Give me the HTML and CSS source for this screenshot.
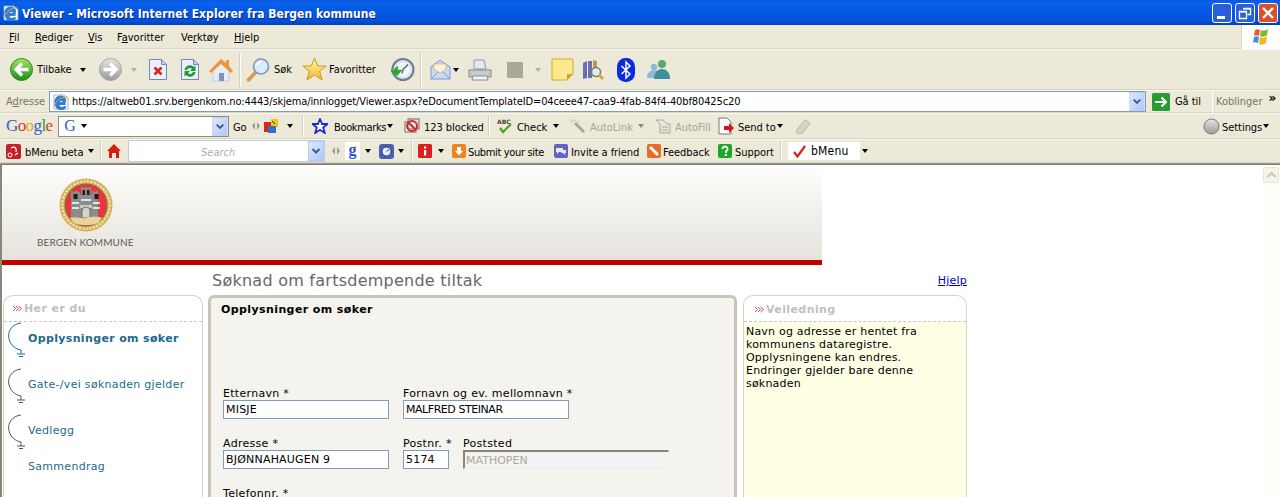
FILE: index.html
```html
<!DOCTYPE html>
<html lang="no">
<head>
<meta charset="utf-8">
<title>Viewer</title>
<link rel="stylesheet" href="styles.css">
</head>
<body>
<svg class="defs" width="0" height="0">
  <defs>
    <linearGradient id="gGreen" x1="0" y1="0" x2="0" y2="1"><stop offset="0" stop-color="#a4e36a"/><stop offset="1" stop-color="#1f8a1a"/></linearGradient>
    <linearGradient id="gGray" x1="0" y1="0" x2="0" y2="1"><stop offset="0" stop-color="#e4e4e4"/><stop offset="1" stop-color="#9a9a9a"/></linearGradient>
    <linearGradient id="gDrop" x1="0" y1="0" x2="1" y2="1"><stop offset="0" stop-color="#e1eafe"/><stop offset="1" stop-color="#aec6f5"/></linearGradient>
    <linearGradient id="gStar" x1="0" y1="0" x2="0" y2="1"><stop offset="0" stop-color="#fff6a8"/><stop offset="1" stop-color="#f2b92c"/></linearGradient>
    <symbol id="ie" viewBox="0 0 16 16"><path d="M1 1h10l4 4v10H1z" fill="#fff" stroke="#8fa6cc" stroke-width=".8"/><path d="M2 10a6 6 0 0 1 11-5l-.5 6H6.500a2.500 2.500 0 0 0 4.500 1l2.500.5A6 6 0 0 1 2 10zM6.500 8H10a2 2 0 0 0-3.500 0z" fill="#2f7fd8" fill-rule="evenodd"/><path d="M1 13c-1-2 4-8 10-10 3-1 4 0 4 2" fill="none" stroke="#e5a92c" stroke-width="1"/></symbol>
    <symbol id="drop" viewBox="0 0 16 20"><rect x=".5" y=".5" width="15" height="19" fill="url(#gDrop)" stroke="#b9ccf0"/><path d="M4.500 8 8 11.500 11.500 8" fill="none" stroke="#3d5a94" stroke-width="2"/></symbol>
    <symbol id="handle" viewBox="0 0 8 8"><path d="M3 0v8L0 4zM5 0v8l3-4z" fill="#a09d90"/></symbol>
    <symbol id="sq-i" viewBox="0 0 14 14"><rect width="14" height="14" rx="1.500" fill="#d8201c"/></symbol>
  </defs>
</svg>

<header class="titlebar">
  <svg class="title-icon" width="16" height="16"><use href="#ie"/></svg>
  <span class="title-text">Viewer - Microsoft Internet Explorer fra Bergen kommune</span>
  <div class="win-btns">
    <button class="win-btn" aria-label="Minimer"><svg width="20" height="20"><rect x="5" y="13" width="8" height="3" fill="#fff"/></svg></button>
    <button class="win-btn" aria-label="Gjenopprett"><svg width="20" height="20"><path d="M8.500 5.500h7v6h-3M4.500 8.500h7v7h-7z" fill="none" stroke="#fff" stroke-width="1.300"/><path d="M8 5h8v1.500H8zM4 8h8v1.500H4z" fill="#fff"/></svg></button>
    <button class="win-btn win-close" aria-label="Lukk"><svg width="20" height="20"><path d="M5 5l10 10M15 5 5 15" stroke="#fff" stroke-width="2.400"/></svg></button>
  </div>
</header>

<nav class="menubar">
  <span class="menu"><u>F</u>il</span>
  <span class="menu"><u>R</u>ediger</span>
  <span class="menu"><u>V</u>is</span>
  <span class="menu">F<u>a</u>voritter</span>
  <span class="menu">Ve<u>r</u>ktøy</span>
  <span class="menu"><u>H</u>jelp</span>
  <div class="flag">
    <svg width="20" height="19" viewBox="0 0 20 19"><path d="M4 3c2-1 3-1 5 0l-1 6c-2-1-3-1-5 0z" fill="#e8592a"/><path d="M10 3c2 1 4 1 7-1l-1 6c-3 2-5 2-7 1z" fill="#7eb62e"/><path d="M3 10c2-1 3-1 5 0l-1 6c-2-1-4-1-5 0z" fill="#3c8fdc"/><path d="M9 10c2 1 4 1 7-1l-1 7c-3 2-5 2-7 1z" fill="#f2b71e"/></svg>
  </div>
</nav>

<div class="tb tb-main">
  <svg width="23" height="23" viewBox="0 0 23 23"><circle cx="11.500" cy="11.500" r="11" fill="url(#gGreen)" stroke="#2a8a22"/><path d="M18.500 11.500H7M12 5.500l-6 6 6 6" fill="none" stroke="#fff" stroke-width="3.400"/></svg>
  <span class="tb-label">Tilbake</span>
  <i class="caret"></i>
  <svg width="23" height="23" viewBox="0 0 23 23"><circle cx="11.500" cy="11.500" r="11" fill="url(#gGray)" stroke="#a5a5a5"/><path d="M4.500 11.500H16M11 5.500l6 6-6 6" fill="none" stroke="#fff" stroke-width="3.400"/></svg>
  <i class="caret caret-off"></i>
  <svg width="20" height="23" viewBox="0 0 20 23"><path d="M1.500 1.500h12l5 5v15h-17z" fill="#eaf0fc" stroke="#6f88b8"/><path d="M13.500 1.500v5h5z" fill="#c4d4f0" stroke="#6f88b8"/><path d="M6.500 9.500l7 7m0-7-7 7" stroke="#d8261c" stroke-width="2.600"/></svg>
  <svg width="20" height="23" viewBox="0 0 20 23"><path d="M1.500 1.500h12l5 5v15h-17z" fill="#eaf0fc" stroke="#6f88b8"/><path d="M13.500 1.500v5h5z" fill="#c4d4f0" stroke="#6f88b8"/><path d="M4.500 12a5.500 5.500 0 0 1 9.500-3l1.500-1.500V13h-5.500l2-2a3 3 0 0 0-5 1zM15.500 14a5.500 5.500 0 0 1-9.500 3l-1.500 1.500V13H10l-2 2a3 3 0 0 0 5-1z" fill="#1f9a2e"/></svg>
  <svg width="24" height="24" viewBox="0 0 24 24"><path d="M4 12l8-7 8 7v11H4z" fill="#e4edf8" stroke="#a9bbd4" stroke-width=".6"/><path d="M10 15h5v8h-5z" fill="#7d95bd"/><path d="M0 13 12 1l5 4V2h3v6l4 5-2 2-10-9-10 9z" fill="#f0923a"/></svg>
  <i class="sep"></i>
  <svg width="25" height="25" viewBox="0 0 25 25"><path d="M2.500 23l7.500-8" stroke="#d69a4a" stroke-width="3.500" stroke-linecap="round"/><circle cx="15" cy="9.500" r="7.500" fill="#dbeafc" stroke="#7895c4" stroke-width="1.600"/><path d="M11 8a4.500 4.500 0 0 1 4-3" fill="none" stroke="#fff" stroke-width="1.500"/></svg>
  <span class="tb-label">Søk</span>
  <svg width="25" height="25" viewBox="0 0 25 25"><path d="M12.500 1l3.300 8h8.400l-6.600 5.300 2.500 8.700-7.600-5-7.600 5 2.500-8.700L.8 9h8.400z" fill="url(#gStar)" stroke="#c99a22"/></svg>
  <span class="tb-label">Favoritter</span>
  <svg width="25" height="25" viewBox="0 0 25 25"><circle cx="13" cy="12.500" r="10.500" fill="#d6e6ee" stroke="#6b7d8a" stroke-width="2"/><circle cx="13" cy="12.500" r="7" fill="#f2f6f8"/><path d="M13 12.500l5-5M13 12.500l-1 4" stroke="#555" stroke-width="1.200"/><path d="M1 12l2.500 2c1-3 3-4.500 5-5l-1 3.500 5 .5-5.500 6-6-4z" fill="#2fa52c"/></svg>
  <i class="sep"></i>
  <svg width="21" height="24" viewBox="0 0 21 24"><path d="M1 9l9-7 10 7v12H1z" fill="#c9d8f4" stroke="#7d99cf"/><path d="M4 11V6h12v5l-6 4z" fill="#fff3d4" stroke="#d2a564" stroke-width=".7"/><path d="M1 21l7-7M20 21l-7-7" stroke="#7d99cf"/></svg>
  <i class="caret"></i>
  <svg width="24" height="24" viewBox="0 0 24 24"><path d="M6 2h10l2 9H6z" fill="#dfe8f4" stroke="#8a9bb2"/><path d="M1 12h22v7H1z" fill="#c9cbc9" stroke="#808583"/><path d="M5 18h14l1 4H4z" fill="#f4f4f4" stroke="#8c8c8c"/></svg>
  <span class="gray-square"></span>
  <i class="caret caret-off"></i>
  <svg width="23" height="23" viewBox="0 0 23 23"><path d="M1 1h21v15l-6 6H1z" fill="#fde88e" stroke="#d6a624"/><path d="M16 22v-6h6z" fill="#d6a624"/></svg>
  <svg width="23" height="23" viewBox="0 0 23 23"><path d="M1 5l4-2v17l-4 1zM6 3h4v17H6z" fill="#6a6fb4"/><path d="M11 2l4 1v11h-4z" fill="#b29a62"/><circle cx="14" cy="14" r="4.500" fill="#dcecf8" stroke="#8c7a45" stroke-width="1.500"/><path d="M17 17l4 4" stroke="#d6a23c" stroke-width="2.500"/></svg>
  <svg width="18" height="24" viewBox="0 0 18 24"><rect width="18" height="24" rx="8.500" fill="#0a2ce0"/><path d="M4.500 8l8.500 8-4 4V4l4 4-8.500 8" fill="none" stroke="#fff" stroke-width="1.500"/></svg>
  <svg width="25" height="22" viewBox="0 0 25 22"><circle cx="8" cy="8" r="3.200" fill="#8fb8d8"/><path d="M1 19c0-5 3-8 7-8s6 3 6 8z" fill="#8fb8d8"/><circle cx="16" cy="5" r="4" fill="#5aa86a"/><path d="M8 20c0-7 4-10 8-10s8 3 8 10z" fill="#3f8f9f"/></svg>
</div>

<div class="tb tb-addr">
  <span class="addr-label">A<u>d</u>resse</span>
  <div class="addr-input">
    <svg width="16" height="16"><use href="#ie"/></svg>
    <span class="addr-url">https://altweb01.srv.bergenkom.no:4443/skjema/innlogget/Viewer.aspx?eDocumentTemplateID=04ceee47-caa9-4fab-84f4-40bf80425c20</span>
    <svg class="drop" width="16" height="19"><use href="#drop"/></svg>
  </div>
  <svg class="go" width="18" height="18" viewBox="0 0 18 18"><rect width="18" height="18" rx="1.500" fill="#2a9a34"/><path d="M3 9h11M9.500 4.500 14 9l-4.500 4.500" fill="none" stroke="#fff" stroke-width="2"/></svg>
  <span class="tb-label">Gå til</span>
  <span class="links">Koblinger</span>
  <span class="chev">»</span>
</div>

<div class="tb tb-google">
  <span class="glogo"><b class="gb">G</b><b class="gr">o</b><b class="gy">o</b><b class="gb">g</b><b class="gg">l</b><b class="gr">e</b></span>
  <div class="field field-g">
    <span class="g-mini">G</span><i class="caret caret-tight"></i>
    <svg class="drop" width="16" height="19"><use href="#drop"/></svg>
  </div>
  <span class="tb-label">Go</span>
  <svg width="8" height="8"><use href="#handle"/></svg>
  <svg width="16" height="16" viewBox="0 0 16 16"><path d="M1 4h8v10H1z" fill="#d8261c"/><path d="M8 1h7v8H8z" fill="#f2c21e"/><path d="M5 8h8v7H5z" fill="#2f6fd0"/><path d="M9 3l3 3" stroke="#333"/></svg>
  <i class="caret"></i>
  <i class="sep sep-s"></i>
  <svg width="16" height="16" viewBox="0 0 16 16"><path d="M8 1l2 5h5.500l-4.300 3.500 1.600 5.500L8 11.800 3.200 15l1.600-5.500L.5 6H6z" fill="#fff" stroke="#1a2ad8" stroke-width="1.800"/></svg>
  <span class="tb-label tight">Bookmarks</span>
  <i class="caret"></i>
  <svg width="16" height="16" viewBox="0 0 16 16"><rect x="1" y="4" width="11" height="10" fill="#fff" stroke="#666"/><rect x="4" y="1" width="11" height="10" fill="#dbe6f8" stroke="#666"/><circle cx="8" cy="8" r="5" fill="none" stroke="#d8261c" stroke-width="2"/><path d="M4.500 4.500l7 7" stroke="#d8261c" stroke-width="2"/></svg>
  <span class="tb-label">123 blocked</span>
  <i class="sep sep-s"></i>
  <svg class="abc" width="17" height="16" viewBox="0 0 17 16"><text x="0" y="6" class="abc-t">ABC</text><path d="M3 10l3 4 8-8" fill="none" stroke="#4aa52c" stroke-width="2.200"/></svg>
  <span class="tb-label">Check</span>
  <i class="caret"></i>
  <svg width="16" height="16" viewBox="0 0 16 16"><path d="M5 5l9 9" stroke="#aaa69a" stroke-width="3"/><path d="M4 1v2M1 4h2M7 4h2M2 2l1 1M6 2l-1 1" stroke="#c4c0b4"/></svg>
  <span class="tb-label off">AutoLink</span>
  <i class="caret caret-mid"></i>
  <svg width="16" height="16" viewBox="0 0 16 16"><path d="M1 2h7l4 4h3v9H5V6z" fill="#e8e5da" stroke="#aaa69a"/><path d="M7 9h6M7 12h6" stroke="#aaa69a"/></svg>
  <span class="tb-label off">AutoFill</span>
  <svg width="17" height="18" viewBox="0 0 17 18"><path d="M1 1h8l4 4v12H1z" fill="#fff" stroke="#777"/><path d="M6 9h5V6l5 5-5 5v-3H6z" fill="#d8141c"/></svg>
  <span class="tb-label">Send to</span>
  <i class="caret"></i>
  <svg width="16" height="17" viewBox="0 0 16 17"><path d="M1 13 10 2l5 3-7 10-5 1z" fill="#d5d2c6" stroke="#bbb8aa"/></svg>
  <svg width="17" height="17" viewBox="0 0 17 17"><circle cx="8.500" cy="8.500" r="7.500" fill="url(#gGray)" stroke="#777"/></svg>
  <span class="tb-label">Settings</span>
  <i class="caret"></i>
</div>

<div class="tb tb-bmenu">
  <svg width="15" height="15" viewBox="0 0 15 15"><rect width="15" height="15" rx="2" fill="#c4202a"/><circle cx="4" cy="11" r="2" fill="none" stroke="#fff"/><path d="M5 4c4-2 6 0 5 4M9 11l3-2" stroke="#fff" fill="none" stroke-width="1.300"/></svg>
  <span class="tb-label">bMenu beta</span>
  <i class="caret"></i>
  <i class="sep sep-s"></i>
  <svg width="14" height="14" viewBox="0 0 14 14"><path d="M7 0l7 7h-2v7H9V9H5v5H2V7H0z" fill="#d81c12"/></svg>
  <div class="field field-s">
    <span class="search-ph">Search</span>
    <svg class="drop" width="16" height="20"><use href="#drop"/></svg>
  </div>
  <svg width="8" height="8"><use href="#handle"/></svg>
  <span class="g-small">g</span>
  <i class="caret"></i>
  <svg width="15" height="15" viewBox="0 0 15 15"><rect width="15" height="15" rx="3" fill="#4a5fb4"/><circle cx="7.500" cy="7.500" r="4.500" fill="#e8eef8" stroke="#2a3a8a"/><path d="M7.500 7.500l2.500-2" stroke="#2a3a8a"/></svg>
  <i class="caret"></i>
  <i class="sep sep-s"></i>
  <svg width="14" height="14" viewBox="0 0 14 14"><use href="#sq-i"/><path d="M6 2.500h2.200v2H6zM6 6h2.200v5.500H6z" fill="#fff"/></svg>
  <i class="caret"></i>
  <svg width="14" height="14" viewBox="0 0 14 14"><rect width="14" height="14" rx="2" fill="#ee8420"/><path d="M5 3h4v4h2l-4 4.500L3 7h2z" fill="#fff"/></svg>
  <span class="tb-label tight">Submit your site</span>
  <svg width="14" height="14" viewBox="0 0 14 14"><rect width="14" height="14" rx="2" fill="#6264c4"/><path d="M2 4h7v4H5l-2 2V8H2zM9 6h3v3h-1v2l-2-2H7" fill="#e8e8fa"/></svg>
  <span class="tb-label">Invite a friend</span>
  <svg width="14" height="14" viewBox="0 0 14 14"><rect width="14" height="14" rx="2" fill="#e86a24"/><path d="M3 3l8 8" stroke="#fff" stroke-width="3"/></svg>
  <span class="tb-label">Feedback</span>
  <svg width="14" height="14" viewBox="0 0 14 14"><rect width="14" height="14" rx="2" fill="#1fa52c"/><path d="M4.500 5a2.500 2.500 0 1 1 3.500 2.300V9" fill="none" stroke="#fff" stroke-width="1.800"/><path d="M6.800 10h2v2h-2z" fill="#fff"/></svg>
  <span class="tb-label">Support</span>
  <i class="sep sep-s"></i>
  <div class="bmenu-box">
    <svg width="13" height="13" viewBox="0 0 13 13"><path d="M1 7l3.500 4.500L12 1" fill="none" stroke="#d8201c" stroke-width="2.200"/></svg>
    <span class="tb-label">bMenu</span>
  </div>
  <i class="caret"></i>
</div>
<div class="chrome-edge"></div>

<div class="viewport">
  <main class="page">
    <div class="banner">
      <svg class="seal" width="54" height="54" viewBox="0 0 54 54">
        <circle cx="27" cy="27" r="26.500" fill="#d6b35c"/>
        <circle cx="27" cy="27" r="23.700" fill="none" stroke="#f4e6ba" stroke-width="2" stroke-dasharray="2 1.500"/>
        <circle cx="27" cy="27" r="21" fill="#ea3440" stroke="#7a6a3c"/>
        <path d="M12 13h2v1h2v-1h3v1h2v-1h0v4h1v-8h2v1h2V9h2v1h2V9h2v8h1v-4h2v1h2v-1h2v27H12z" fill="#8b8d8c"/>
        <path d="M14.500 16h4v5h-4zM23.500 12h2.500v5h-2.500zM28 12h2.500v5H28zM35.500 16h4v5h-4z" fill="#1c1c1c"/>
        <path d="M13 24h7v2h-7zM34 24h7v2h-7zM22 21h10v2H22zM13 29h7v2h-7zM34 29h7v2h-7z" fill="#e4e4e0"/>
        <path d="M21 27h12v3H21z" fill="#c9c9c4"/>
        <path d="M23 40v-7a4 4 0 0 1 8 0v7z" fill="#d5d3c8" stroke="#555" stroke-width=".7"/>
        <path d="M11 40c5-2 11 1 16 0s11-2 16 0l-4 5c-7 3-17 3-24 0z" fill="#e9d59c"/>
      </svg>
      <span class="brand">BERGEN KOMMUNE</span>
    </div>
    <div class="redbar"></div>
    <div class="title-row">
      <h1 class="page-title">Søknad om fartsdempende tiltak</h1>
      <a class="help" href="#">Hjelp</a>
    </div>
    <div class="cols">
      <aside class="panel nav">
        <h2 class="panel-head"><svg class="arrows" width="9" height="7" viewBox="0 0 9 7"><path d="M0 1l2.500 2.500L0 6M3 1l2.500 2.500L3 6M5.500 1 8.500 3.500 5.500 6" fill="none" stroke="#c9574f"/></svg>Her er du</h2>
        <ul class="steps">
          <li class="step step-on"><svg class="arc" width="19" height="36" viewBox="0 0 19 36"><path d="M13 1C4 2 0 9 0.700 15c.8 7 6 12 12.300 13v4M9 32h8M11 34.500h4" fill="none" stroke="currentColor"/></svg><span>Opplysninger om søker</span></li>
          <li class="step"><svg class="arc" width="19" height="36" viewBox="0 0 19 36"><path d="M13 1C4 2 0 9 0.700 15c.8 7 6 12 12.300 13v4M9 32h8M11 34.500h4" fill="none" stroke="currentColor"/></svg><span>Gate-/vei søknaden gjelder</span></li>
          <li class="step"><svg class="arc" width="19" height="36" viewBox="0 0 19 36"><path d="M13 1C4 2 0 9 0.700 15c.8 7 6 12 12.300 13v4M9 32h8M11 34.500h4" fill="none" stroke="currentColor"/></svg><span>Vedlegg</span></li>
          <li class="step step-last"><span>Sammendrag</span></li>
        </ul>
      </aside>
      <section class="form">
        <h2 class="form-head">Opplysninger om søker</h2>
        <div class="form-row">
          <label class="f"><span>Etternavn *</span><input class="in in-l" value="MISJE"></label>
          <label class="f"><span>Fornavn og ev. mellomnavn *</span><input class="in in-l in-tight" value="MALFRED STEINAR"></label>
        </div>
        <div class="form-row">
          <label class="f"><span>Adresse *</span><input class="in in-l" value="BJØNNAHAUGEN 9"></label>
          <label class="f f-s"><span>Postnr. *</span><input class="in in-s" value="5174"></label>
          <label class="f"><span>Poststed</span><input class="in in-d" value="MATHOPEN" disabled></label>
        </div>
        <div class="form-row">
          <label class="f"><span>Telefonnr. *</span></label>
        </div>
      </section>
      <aside class="panel guide">
        <h2 class="panel-head guide-head"><svg class="arrows" width="9" height="7" viewBox="0 0 9 7"><path d="M0 1l2.500 2.500L0 6M3 1l2.500 2.500L3 6M5.500 1 8.500 3.500 5.500 6" fill="none" stroke="#c9574f"/></svg>Veiledning</h2>
        <p class="guide-text">Navn og adresse er hentet fra kommunens dataregistre. Opplysningene kan endres. Endringer gjelder bare denne søknaden</p>
      </aside>
    </div>
  </main>
  <div class="scrollbar">
    <div class="sb-btn"><svg width="15" height="15" viewBox="0 0 15 15"><path d="M3.500 9 7.500 5l4 4" fill="none" stroke="#c9c6b8" stroke-width="2"/></svg></div>
  </div>
</div>
</body>
</html>
```
FILE: styles.css
```css
* { box-sizing: border-box; }
html, body { margin: 0; height: 497px; overflow: hidden; background: #fff; }
body { font: 11px "DejaVu Sans", sans-serif; color: #000; }
.defs { position: absolute; }
svg { display: block; }

.titlebar { height: 25px; display: flex; align-items: center; padding-left: 5px; color: #fff;
  background: linear-gradient(#0a57dc 0, #0a62ea 10%, #0458e4 50%, #0350d8 85%, #0340b8 100%); }
.title-text { margin-left: 3px; padding-top: 2px; font: bold 12px "DejaVu Sans Condensed", "DejaVu Sans", sans-serif; letter-spacing: .05px; text-shadow: 1px 1px 0 #0a2a80; white-space: nowrap; }
.title-icon { margin-left: -2px; }
.win-btns { margin-left: auto; display: flex; gap: 3px; padding-right: 2px; }
.win-btn { width: 20px; height: 20px; padding: 0; border: 1px solid #fff; border-radius: 3px; background: #2a5fdc; }
.win-btn svg { margin: -1px; }
.win-close { background: #d8502c; }

.menubar { height: 24px; display: flex; align-items: center; background: #ece9d8; border-bottom: 1px solid #d8d4c2; padding-left: 9px; }
.menu { font: 11px "DejaVu Sans Condensed", "DejaVu Sans", sans-serif; padding-top: 2px; }
.menu:nth-child(1) { width: 26px; }
.menu:nth-child(2) { width: 53px; }
.menu:nth-child(3) { width: 29px; }
.menu:nth-child(4) { width: 64px; }
.menu:nth-child(5) { width: 53px; }
.flag { margin-left: auto; width: 39px; height: 24px; background: #fff; border-left: 1px solid #d8d4c2; display: flex; align-items: center; justify-content: center; }

.tb { display: grid; align-items: center; justify-items: start; background: #ece9d8; border-bottom: 1px solid #d8d4c2; border-top: 1px solid #f8f7f0; }
.tb-label { font: 11px "DejaVu Sans Condensed", "DejaVu Sans", sans-serif; white-space: nowrap; letter-spacing: -.05px; }
.tight { letter-spacing: -.35px; }
.off { color: #a8a598; }

.tb-main { height: 41px; padding-left: 10px;
  grid-template-columns: 27px 43px 19px 32px 17px 32px 29px 30px 7px 28px 28px 27px 61px 30px 10px 23px 15px 39px 28px 16px 31px 35px 29px auto; }
.tb-addr { height: 23px; display: flex; padding-left: 6px; background: #ece9d8; }
.tb-google { height: 26px; padding-left: 6px;
  grid-template-columns: 52px 175px 19px 11px 24px 15px 10px 22px 53px 17px 20px 64px 9px 20px 36px 17px 20px 48px 17px 20px 43px 20px 39px 18px 408px 19px 41px auto; }
.tb-bmenu { height: 24px; padding-left: 6px;
  grid-template-columns: 19px 63px 12px 7px 21px 204px 13px 20px 14px 19px 13px 7px 20px 14px 16px 86px 17px 76px 16px 55px 17px 45px 8px 74px auto; }
.tb-google .tb-label, .tb-bmenu .tb-label { padding-top: 2px; }
.chrome-edge { height: 2px; background: linear-gradient(#aca899, #6f6c60); }

.caret { display: block; width: 0; height: 0; border: 3px solid transparent; border-top: 4px solid #000; border-bottom: 0; }
.caret-off { border-top-color: #b4b1a4; }
.caret-mid { border-top-color: #8c897c; }
.caret-tight { margin-left: 3px; }
.sep { display: block; width: 1px; height: 34px; background: #d3cfbc; border-right: 1px solid #fff; box-sizing: content-box; }
.sep-s { height: 22px; }
.gray-square { display: block; width: 16px; height: 16px; background: #aca899; }

.addr-label { flex: none; width: 43px; font: 11px "DejaVu Sans Condensed", "DejaVu Sans", sans-serif; color: #777568; }
.addr-input { flex: none; width: 1097px; height: 21px; display: flex; align-items: center; background: #fff; border: 1px solid #7f9db9; padding: 0 0 0 3px; }
.addr-url { margin-left: 3px; font: 11px "DejaVu Sans Condensed", "DejaVu Sans", sans-serif; letter-spacing: -.115px; white-space: nowrap; }
.drop { margin-left: auto; }
.go { flex: none; margin-left: 6px; margin-right: 5px; }
.links { flex: none; margin-left: 11px; padding-left: 3px; height: 22px; border-left: 1px solid #fff; color: #777568; font: 11px/22px "DejaVu Sans Condensed", "DejaVu Sans", sans-serif; }
.chev { flex: none; margin-left: 6px; font: bold 12px/12px "DejaVu Sans", sans-serif; align-self: flex-start; margin-top: 1px; }

.glogo { font: 17px "Liberation Serif", serif; letter-spacing: -.6px; }
.glogo b { font-weight: 400; }
.gb { color: #2a5fc8; } .gr { color: #d03a2c; } .gy { color: #e0a820; } .gg { color: #2f9a3a; }
.field { display: flex; align-items: center; background: #fff; border: 1px solid #8f8d80; height: 21px; }
.field-g { width: 171px; padding-left: 3px; }
.g-mini { font: 16px/18px "Liberation Serif", serif; color: #2a5fc8; width: 16px; text-align: center; }
.field-s { width: 197px; border-color: #b9ccf0; height: 22px; }
.search-ph { font: italic 11px "DejaVu Sans Condensed", "DejaVu Sans", sans-serif; color: #b0aea4; padding: 2px 0 0 72px; }
.g-small { font: bold 16px/16px "Liberation Serif", serif; color: #3050d8; background: #fff; width: 15px; text-align: center; padding-bottom: 2px; }
.abc-t { font: bold 6px "DejaVu Sans", sans-serif; fill: #444; }
.bmenu-box { display: flex; align-items: center; gap: 5px; width: 72px; height: 18px; background: #fff; padding-left: 5px; }
.bmenu-box .tb-label { font-size: 12px; letter-spacing: .2px; padding-top: 0; }

.viewport { display: flex; height: 332px; border-left: 2px solid #8a877a; overflow: hidden; }
.page { flex: 1; min-width: 0; }
.scrollbar { width: 18px; background: #fdfdf9; }
.sb-btn { width: 16px; height: 16px; margin: 2px 0 0 1px; border: 1px solid #e6e4d8; background: #f5f4ea; border-radius: 2px; }

.banner { width: 820px; height: 95px; background: linear-gradient(#fff 0, #f7f6f3 25%, #e6e3dc 100%); padding: 13px 0 0 35px; display: flex; flex-direction: column; align-items: flex-start; }
.seal { margin-left: 22px; }
.brand { font: 10px "Lato", sans-serif; color: #5b5b5b; margin-top: 4px; letter-spacing: .1px; white-space: nowrap; }
.redbar { width: 820px; height: 5px; background: #c00000; }

.title-row { width: 965px; height: 30px; padding-left: 210px; display: flex; justify-content: space-between; align-items: flex-start; }
.page-title { margin: 0; font: 400 16px/32px "DejaVu Sans", sans-serif; letter-spacing: .25px; color: #666; white-space: nowrap; }
.help { color: #00c; font-size: 11px; letter-spacing: .2px; margin-top: 9px; }

.cols { display: flex; align-items: stretch; padding-left: 1px; height: 202px; }
.panel { border: 1px solid #d6d3c8; border-bottom: 0; border-radius: 10px 10px 0 0; background: #fff; }
.panel-head { margin: 0; height: 26px; font: bold 11px/24px "DejaVu Sans", sans-serif; color: #c0c0c0; border-bottom: 1px dashed #c8c8c8; display: flex; align-items: center; padding-left: 9px; letter-spacing: .4px; }
.arrows { margin-right: 2px; }
.nav { width: 200px; }
.steps { list-style: none; margin: 0; padding: 0; }
.step { height: 46px; display: flex; align-items: flex-start; padding-left: 4px; color: #555; }
.step span { color: #1e6a8c; margin: 10px 0 0 1px; letter-spacing: .3px; white-space: nowrap; }
.step-on { color: #1e6a8c; }
.step-on span { font-weight: bold; letter-spacing: .35px; }
.step-last { height: 26px; padding-left: 23px; }
.step-last span { margin-top: 0; }

.form { width: 529px; margin-left: 5px; background: #f4f3ee; border: 3px solid #c9c4b4; border-bottom: 0; border-radius: 6px 6px 0 0; padding: 5px 0 0 12px; }
.form-head { margin: 0 0 0 -2px; height: 77px; font: bold 11px/14px "DejaVu Sans", sans-serif; letter-spacing: .4px; }
.form-row { display: flex; gap: 14px; height: 50px; }
.f { display: flex; flex-direction: column; line-height: 13px; letter-spacing: .3px; white-space: nowrap; padding-top: 7px; }
.f-s { width: 46px; }
.in { font: 11px "DejaVu Sans", sans-serif; height: 19px; border: 1px solid #7f9db9; padding: 0 2px; background: #fff; color: #000; border-radius: 0; letter-spacing: .2px; }
.in-tight { letter-spacing: -.45px; }
.in-l { width: 166px; }
.in-s { width: 46px; }
.in-d { width: 206px; background: #f4f3f3; color: #aca899; border-style: solid; border-width: 2px 1px 1px 2px; border-color: #8a877a #f0efe8 #f0efe8 #8a877a; padding: 0 1px; letter-spacing: 0; }

.guide { width: 224px; margin-left: 6px; }
.guide-head { padding-left: 11px; padding-top: 2px; }
.guide-text { margin: 0; padding: 3px 30px 0 2px; background: #ffffe6; height: 100%; line-height: 13px; letter-spacing: .2px; }
```
